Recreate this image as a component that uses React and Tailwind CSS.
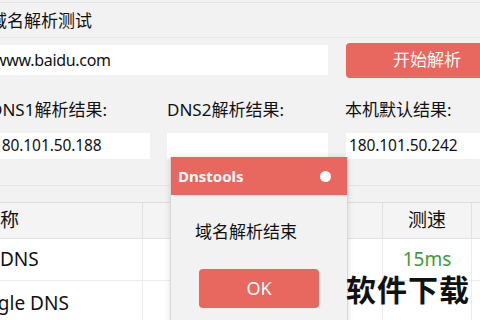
import React from "react";

const coral = "bg-[#e8675e]";

export default function App() {
  return (
    <div
      className="relative w-[480px] h-[320px] overflow-hidden bg-[#f2f2f2] text-[#111]"
      style={{ fontFamily: '"Noto Sans", "Noto Sans CJK SC", sans-serif' }}
    >
      <div className="ml-[-10px] w-[520px]">
        {/* 顶部残留边框 */}
        <div className="h-[3px] border-b border-[#e4e4e4]" />

        {/* 标题 */}
        <div className="h-[35px] flex items-center border-b border-[#e8e8e8] text-[17px] leading-none">
          域名解析测试
        </div>

        {/* 域名输入 + 按钮 */}
        <div className="flex items-center gap-[18px] h-[42px] mt-[1px]">
          <div className="w-[338px] h-[30px] bg-white flex items-center pl-[4px] text-[16px] tracking-[-0.3px]">
            www.baidu.com
          </div>
          <button className={`w-[162px] h-[35px] ${coral} rounded-[4px] text-white text-[17px] flex items-center justify-center`}>
            开始解析
          </button>
        </div>

        {/* 结果标签 */}
        <div className="flex gap-[17px] h-[52px] items-center text-[17px] leading-none pt-[4px]">
          <div className="w-[160px]">DNS1解析结果:</div>
          <div className="w-[161px]">DNS2解析结果:</div>
          <div className="w-[134px]">本机默认结果:</div>
        </div>

        {/* 结果输入 */}
        <div className="flex gap-[17px] h-[26px] text-[15.5px] tracking-[-0.1px]">
          <div className="w-[160px] bg-white flex items-center pl-[3px]">180.101.50.188</div>
          <div className="w-[161px] bg-white" />
          <div className="w-[160px] bg-white flex items-center pl-[3px] ml-[1px]">180.101.50.242</div>
        </div>

        <div className="h-[27px] border-b border-[#e4e4e4]" />
        <div className="h-[17px] border-b border-[#dcdcdc]" />

        {/* 表格 */}
        <div className="ml-[10px] text-[19px]">
          <div className="flex h-[36px] bg-[#f4f4f4] border-b border-[#e2e2e2]">
            <div className="w-[143px] border-r border-[#e2e2e2] flex items-center">
              <span className="ml-[-19px]">名称</span>
            </div>
            <div className="w-[240px] border-r border-[#e2e2e2]" />
            <div className="w-[89px] border-r border-[#e2e2e2] flex items-center justify-center">测速</div>
            <div className="flex-1" />
          </div>
          <div className="flex h-[42px] bg-white border-b border-[#ececec]">
            <div className="w-[143px] border-r border-[#ececec] flex items-center">DNS</div>
            <div className="w-[240px] border-r border-[#ececec]" />
            <div className="w-[89px] border-r border-[#ececec] flex items-center justify-center text-[#3f9a3a]">15ms</div>
            <div className="flex-1" />
          </div>
          <div className="flex h-[44px] bg-white">
            <div className="w-[143px] border-r border-[#ececec] flex items-center">
              <span className="ml-[-39px] whitespace-nowrap">Google DNS</span>
            </div>
            <div className="w-[240px] border-r border-[#ececec]" />
            <div className="w-[89px] border-r border-[#ececec]" />
            <div className="flex-1" />
          </div>
        </div>
      </div>

      {/* 弹窗 */}
      <div className="absolute left-[170px] top-[157px] w-[178px] h-[170px] flex flex-col bg-[#f2f2f2] border-x border-[#d8d8d8] shadow-[0_0_6px_rgba(0,0,0,0.12)]">
        <div className={`h-[38px] ${coral} flex items-center justify-between pl-[7px] pr-[16px]`}>
          <span className="text-white font-bold text-[15px] leading-none">Dnstools</span>
          <span className="w-[11px] h-[11px] rounded-full bg-white" />
        </div>
        <div className="h-[74px] flex items-center pl-[24px] text-[17px]">域名解析结束</div>
        <button className={`ml-[28px] w-[120px] h-[39px] ${coral} rounded-[4px] text-white text-[18px] flex items-center justify-center`}>
          OK
        </button>
      </div>

      {/* 水印 */}
      <div className="absolute left-[346px] top-[275px] text-[30px] font-bold text-[#111] leading-none tracking-[1px] whitespace-nowrap">
        软件下载
      </div>
    </div>
  );
}
